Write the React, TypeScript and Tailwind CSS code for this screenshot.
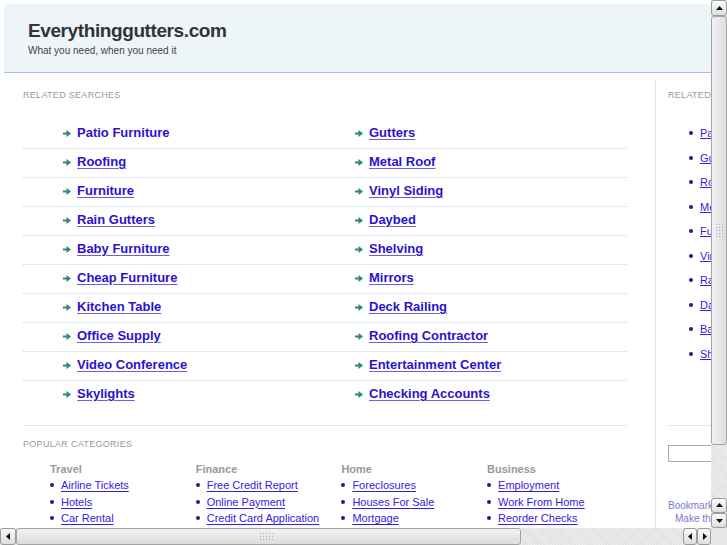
import React from "react";

// Parked-domain landing page with old GTK-style scrollbars.

const SEARCHES: [string, string][] = [
  ["Patio Furniture", "Gutters"],
  ["Roofing", "Metal Roof"],
  ["Furniture", "Vinyl Siding"],
  ["Rain Gutters", "Daybed"],
  ["Baby Furniture", "Shelving"],
  ["Cheap Furniture", "Mirrors"],
  ["Kitchen Table", "Deck Railing"],
  ["Office Supply", "Roofing Contractor"],
  ["Video Conference", "Entertainment Center"],
  ["Skylights", "Checking Accounts"],
];

const SIDE = [
  "Patio Furniture",
  "Gutters",
  "Roofing",
  "Metal Roof",
  "Furniture",
  "Vinyl Siding",
  "Rain Gutters",
  "Daybed",
  "Baby Furniture",
  "Shelving",
];

const CATEGORIES = [
  { title: "Travel", items: ["Airline Tickets", "Hotels", "Car Rental"] },
  { title: "Finance", items: ["Free Credit Report", "Online Payment", "Credit Card Application"] },
  { title: "Home", items: ["Foreclosures", "Houses For Sale", "Mortgage"] },
  { title: "Business", items: ["Employment", "Work From Home", "Reorder Checks"] },
];

function Arrow() {
  return (
    <svg width="8" height="7" viewBox="0 0 8 7" className="mr-[6px] shrink-0">
      <rect x="0" y="2.5" width="4.5" height="2" fill="#2f8a7c" />
      <polygon points="3.5,0 8,3.5 3.5,7" fill="#2f8a7c" />
    </svg>
  );
}

function Bullet() {
  return <span className="mr-[7px] inline-block h-[4px] w-[4px] shrink-0 rounded-full bg-[#1c1c8f]" />;
}

function Tri({ dir }: { dir: "up" | "down" | "left" | "right" }) {
  const pts = {
    up: "1,6 4.5,2 8,6",
    down: "1,3 4.5,7 8,3",
    left: "6,1 2,4.5 6,8",
    right: "3,1 7,4.5 3,8",
  }[dir];
  return (
    <svg width="9" height="9" viewBox="0 0 9 9">
      <polygon points={pts} fill="#111" />
    </svg>
  );
}

function Btn({ dir, className }: { dir: "up" | "down" | "left" | "right"; className: string }) {
  return (
    <div
      className={`flex shrink-0 items-center justify-center rounded-[3px] border border-[#9a9a9a] bg-gradient-to-b from-[#fbfbfb] to-[#dedede] ${className}`}
    >
      <Tri dir={dir} />
    </div>
  );
}

function Grip({ vertical }: { vertical?: boolean }) {
  const cols = vertical ? 3 : 5;
  const rows = vertical ? 5 : 3;
  return (
    <div className="grid gap-[2px]" style={{ gridTemplateColumns: `repeat(${cols}, 1px)` }}>
      {Array.from({ length: cols * rows }).map((_, i) => (
        <span key={i} className="h-[1px] w-[1px] bg-[#b0b0b0]" />
      ))}
    </div>
  );
}

export default function App() {
  return (
    <div
      className="flex h-[545px] w-[727px] flex-col overflow-hidden bg-white"
      style={{ fontFamily: '"Liberation Sans", Arial, sans-serif' }}
    >
      <div className="flex h-[528px]">
        {/* page viewport */}
        <div className="h-[528px] w-[711px] overflow-hidden">
          <div className="w-[960px] p-[4px]">
            <header className="h-[69px] border-b border-[#a7bfe6] bg-[#eef5f8] pl-[24px] pt-[14px]">
              <h1 className="text-[19px] font-bold leading-[26px] tracking-[-0.4px] text-[#333]">
                Everythinggutters.com
              </h1>
              <p className="mt-[0px] text-[10px] leading-[13px] text-[#444]">What you need, when you need it</p>
            </header>

            <div className="mt-[7px] flex">
              {/* main column */}
              <div className="w-[651px] shrink-0 pl-[19px] pr-[28px] pt-[9px]">
                <div className="text-[9px] leading-[12px] tracking-[0.3px] text-[#999]">RELATED SEARCHES</div>
                <div className="mt-[19px]">
                  {SEARCHES.map((row, i) => (
                    <div
                      key={i}
                      className={`flex h-[29px] pl-[40px] pt-[5px] ${
                        i < SEARCHES.length - 1 ? "border-b border-dotted border-[#c3d6ea]" : ""
                      }`}
                    >
                      {row.map((t, j) => (
                        <div key={j} className="flex h-[16px] w-[292px] shrink-0 items-center">
                          <Arrow />
                          <a
                            className={`text-[13px] font-bold leading-[16px] text-[#2a12cf] ${
                              i === 0 && j === 0 ? "" : "underline decoration-[#6c5fe0] underline-offset-[2px]"
                            }`}
                          >
                            {t}
                          </a>
                        </div>
                      ))}
                    </div>
                  ))}
                </div>
                <div className="mt-[15px] border-t border-[#dde7f0]" />
                <div className="mt-[12px] text-[9px] leading-[12px] tracking-[0.3px] text-[#999]">
                  POPULAR CATEGORIES
                </div>
                <div className="mt-[12px] flex pl-[27px]">
                  {CATEGORIES.map((c) => (
                    <div key={c.title} className="w-[145.7px] shrink-0">
                      <div className="text-[11px] font-bold leading-[14px] text-[#999]">{c.title}</div>
                      <ul className="mt-[1px]">
                        {c.items.map((it) => (
                          <li key={it} className="flex h-[16.4px] items-center">
                            <Bullet />
                            <a className="text-[11px] leading-[14px] text-[#3322dd] underline underline-offset-[2px]">
                              {it}
                            </a>
                          </li>
                        ))}
                      </ul>
                    </div>
                  ))}
                </div>
              </div>

              {/* sidebar */}
              <div className="h-[460px] w-[220px] shrink-0 border-l border-[#dde7f0] pl-[12px] pt-[9px]">
                <div className="text-[9px] leading-[12px] tracking-[0.3px] text-[#999]">RELATED SEARCHES</div>
                <ul className="mt-[20px] pl-[21px]">
                  {SIDE.map((s) => (
                    <li key={s} className="flex h-[24.5px] items-center">
                      <Bullet />
                      <a className="text-[11px] leading-[14px] text-[#3322dd] underline">{s}</a>
                    </li>
                  ))}
                </ul>
                <div className="mt-[59px] border-t border-[#dde7f0]" />
                <input className="mt-[19px] h-[17px] w-[180px] border border-[#aaa] bg-white" />
                <div className="mt-[33px] text-[10px] leading-[13px] text-[#7a7ad2]">Bookmark this page</div>
                <div className="pl-[7px] text-[10px] leading-[13px] text-[#7a7ad2]">Make this your homepage</div>
              </div>
            </div>
          </div>
        </div>

        {/* vertical scrollbar */}
        <div className="flex w-[16px] flex-col bg-[#e6e6e6]">
          <Btn dir="up" className="h-[16px] w-[16px]" />
          <div className="flex h-[429px] w-[16px] items-center justify-center rounded-[3px] border border-[#a4a4a4] bg-gradient-to-r from-[#f3f3f3] to-[#dcdcdc]">
            <Grip vertical />
          </div>
          <div className="flex-1 bg-[repeating-linear-gradient(45deg,#e2e2e2_0px,#e2e2e2_1px,#ececec_1px,#ececec_2px)]" />
          <Btn dir="up" className="h-[15px] w-[16px]" />
          <Btn dir="down" className="h-[15px] w-[16px]" />
        </div>
      </div>

      {/* horizontal scrollbar */}
      <div className="flex h-[17px]">
        <div className="flex w-[711px] bg-[#e6e6e6]">
          <Btn dir="left" className="h-[17px] w-[16px]" />
          <div className="flex h-[17px] w-[505px] items-center justify-center rounded-[3px] border border-[#a4a4a4] bg-gradient-to-b from-[#f3f3f3] to-[#dcdcdc] pr-[12px]">
            <div className="mr-[-8px]">
              <Grip />
            </div>
          </div>
          <div className="flex-1 bg-[repeating-linear-gradient(45deg,#e2e2e2_0px,#e2e2e2_1px,#ececec_1px,#ececec_2px)]" />
          <Btn dir="left" className="h-[17px] w-[14px]" />
          <Btn dir="right" className="h-[17px] w-[14px]" />
        </div>
        <div className="w-[16px] bg-[#e6e6e6]" />
      </div>
    </div>
  );
}
